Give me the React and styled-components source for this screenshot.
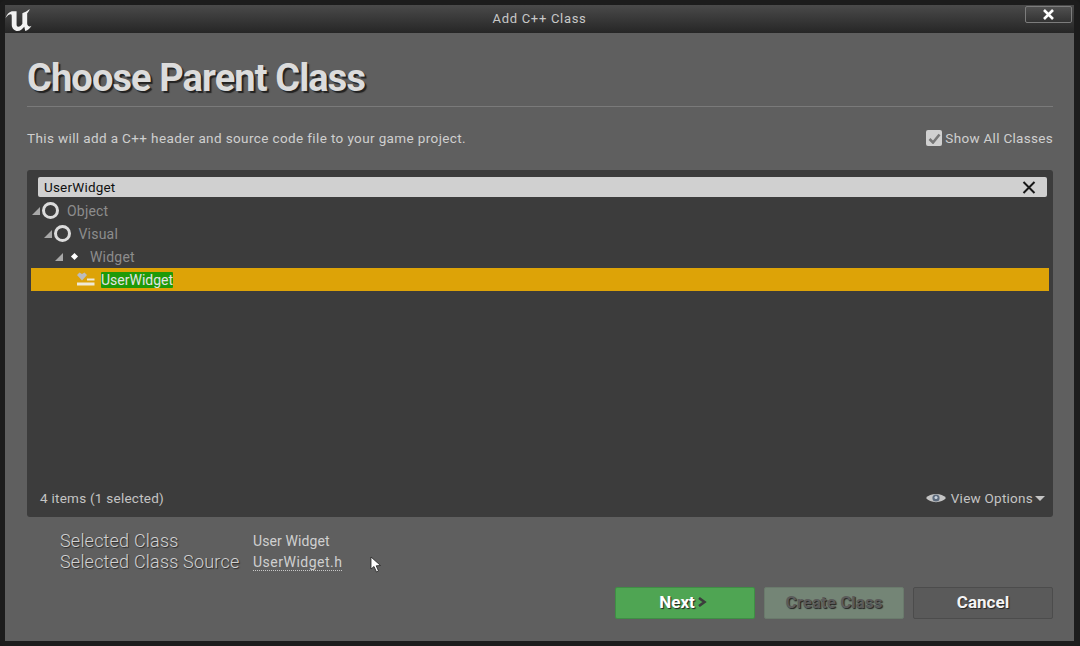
import React from 'react';
import styled, { createGlobalStyle } from 'styled-components';

const GlobalStyle = createGlobalStyle`
    html, body { margin: 0; padding: 0; background: #1a1a1a; }
    body { font-family: Roboto, "Liberation Sans", sans-serif; }
    #root { width: 1080px; height: 646px; overflow: hidden; }
`;

const treeRows = [
    { name: 'Object', depth: 0, icon: 'ring' },
    { name: 'Visual', depth: 1, icon: 'ring' },
    { name: 'Widget', depth: 2, icon: 'dot' },
];

const App = () => {
    return (
        <Window>
            <GlobalStyle />
            <TitleBar>
                <Logo viewBox="0 0 28 24">
                    <path d="M7 3 C4 4 2 6 0.5 10 C3 7 4 6 6 6 C7 6 7 7 7 9 L7 17 C7 21 10 23.5 13 23.5 C16 23.5 18 21 20 19 L21 23.5 C24 22.5 26 20.5 27.5 18 C26 19 25 19 24 18 C23 17 23 16 23 14 L23 5 C24 4 25.5 2 25.5 0.5 C23 3 20 4 18 5 L18 16 C17 18 15 19 14 19 C12 19 12 17 12 15 L12 3 C10 3 9 3 7 3 Z" fill="#f2f2f2" />
                </Logo>
                <TitleText>Add C++ Class</TitleText>
                <CloseButton>
                    <svg width="13" height="11" viewBox="0 0 13 11">
                        <path d="M2 1 L11 10 M11 1 L2 10" stroke="#fff" strokeWidth="2.6" />
                    </svg>
                </CloseButton>
            </TitleBar>
            <Body>
                <Heading>Choose Parent Class</Heading>
                <Rule />
                <InfoRow>
                    <InfoText>This will add a C++ header and source code file to your game project.</InfoText>
                    <CheckLabel>
                        <CheckBox>
                            <svg width="13" height="11" viewBox="0 0 13 11">
                                <path d="M1.5 6 L5 9.5 L11.5 1.5" stroke="#777" strokeWidth="2.6" fill="none" />
                            </svg>
                        </CheckBox>
                        Show All Classes
                    </CheckLabel>
                </InfoRow>
                <Panel>
                    <SearchBox>
                        <SearchText>UserWidget</SearchText>
                        <svg width="14" height="13" viewBox="0 0 14 13">
                            <path d="M1.5 1 L12.5 12 M12.5 1 L1.5 12" stroke="#161616" strokeWidth="2" />
                        </svg>
                    </SearchBox>
                    <Tree>
                        {treeRows.map((row) => (
                            <TreeRow key={row.name} $depth={row.depth}>
                                <Arrow />
                                {row.icon === 'ring' ? <Ring /> : <DotSlot><Dot /></DotSlot>}
                                <RowName>{row.name}</RowName>
                            </TreeRow>
                        ))}
                        <SelectedRow>
                            <svg width="18" height="16" viewBox="0 0 18 16">
                                <path d="M0 3 L2.5 0.5 L5 2 L7.5 0.5 L10 3 L5 8.5 Z" fill="#bcbcbc" />
                                <path d="M10 6.5 H17.5 V8.5 H10 Z M0 10.5 H17.5 V13.5 H0 Z" fill="#efe9d6" />
                            </svg>
                            <Highlight>UserWidget</Highlight>
                        </SelectedRow>
                    </Tree>
                    <PanelFooter>
                        <span>4 items (1 selected)</span>
                        <ViewOptions>
                            <svg width="20" height="12" viewBox="0 0 20 12">
                                <path d="M0 6 C4 0.5 16 0.5 20 6 C16 11.5 4 11.5 0 6 Z" fill="#c4c4c4" />
                                <circle cx="10" cy="6" r="3.6" fill="#5c6a7c" />
                                <circle cx="10" cy="5.4" r="1.5" fill="#c9d2dc" />
                            </svg>
                            View Options
                            <Caret />
                        </ViewOptions>
                    </PanelFooter>
                </Panel>
                <Details>
                    <DetailLabel>Selected Class</DetailLabel>
                    <DetailValue>User Widget</DetailValue>
                    <DetailLabel>Selected Class Source</DetailLabel>
                    <DetailValue>
                        <SourceLink>UserWidget.h</SourceLink>
                    </DetailValue>
                </Details>
                <Cursor width="12" height="17" viewBox="0 0 12 17">
                    <path d="M1 1 L1 13 L4 10.5 L6.5 16 L8.5 15 L6.2 9.8 L10.5 9.5 Z" fill="#fff" stroke="#222" strokeWidth="0.8" />
                </Cursor>
                <Actions>
                    <ActionButton $variant="next">
                        Next
                        <svg width="10" height="10" viewBox="0 0 10 10">
                            <path d="M2 1 L7.5 5 L2 9" stroke="#3c3c3c" strokeWidth="2.6" fill="none" />
                        </svg>
                    </ActionButton>
                    <ActionButton $variant="disabled">Create Class</ActionButton>
                    <ActionButton $variant="cancel">Cancel</ActionButton>
                </Actions>
            </Body>
        </Window>
    );
};

const Window = styled.div`
    width: 1080px;
    height: 646px;
    box-sizing: border-box;
    padding: 5px 6px 5px 5px;
    background: #1c1c1c;
    border-radius: 5px;
    display: flex;
    flex-direction: column;
    position: relative;
`;

const TitleBar = styled.div`
    height: 28px;
    flex: none;
    display: flex;
    align-items: center;
    justify-content: center;
    background: linear-gradient(#4a4a4a, #262626);
`;

const Logo = styled.svg`
    position: absolute;
    left: 5px;
    top: 8px;
    width: 27px;
    height: 24px;
`;

const TitleText = styled.div`
    color: #c8c8c8;
    font-size: 13px;
    letter-spacing: 0.7px;
    margin-bottom: 1px;
`;

const CloseButton = styled.div`
    position: absolute;
    top: 6px;
    right: 8px;
    width: 47px;
    height: 17px;
    box-sizing: border-box;
    display: flex;
    align-items: center;
    justify-content: center;
    background: linear-gradient(#505050, #333);
    border: 1px solid #7c7c7c;
    border-radius: 2px;
`;

const Body = styled.div`
    flex: 1;
    min-height: 0;
    background: #5f5f5f;
    padding: 0 21px 0 22px;
    display: flex;
    flex-direction: column;
    position: relative;
`;

const Heading = styled.h1`
    margin: 23px 0 0;
    height: 45px;
    line-height: 45px;
    font-size: 38px;
    font-weight: 700;
    color: #dcdcdc;
    letter-spacing: -0.9px;
    text-shadow: 2px 2px 1px #222;
`;

const Rule = styled.div`
    height: 1px;
    margin: 5px 0 0;
    background: #7a7a7a;
`;

const InfoRow = styled.div`
    display: flex;
    justify-content: space-between;
    align-items: center;
    margin-top: 22px;
    height: 18px;
    font-size: 13.5px;
    color: #cfcfcf;
`;

const InfoText = styled.span`
    letter-spacing: 0.38px;
`;

const CheckLabel = styled.span`
    display: flex;
    align-items: center;
    gap: 3px;
    letter-spacing: 0.3px;
`;

const CheckBox = styled.span`
    width: 16px;
    height: 16px;
    background: #d0d0d0;
    border-radius: 2px;
    display: flex;
    align-items: center;
    justify-content: center;
`;

const Panel = styled.div`
    margin-top: 23px;
    height: 347px;
    box-sizing: border-box;
    background: #3c3c3c;
    border-radius: 3px;
    padding: 7px 4px 0;
    display: flex;
    flex-direction: column;
`;

const SearchBox = styled.div`
    height: 20px;
    flex: none;
    margin: 0 2px 0 7px;
    padding: 0 11px 0 6px;
    background: #d0d0d0;
    border-radius: 2px;
    display: flex;
    align-items: center;
    justify-content: space-between;
`;

const SearchText = styled.span`
    color: #111;
    font-size: 13.5px;
    letter-spacing: 0.2px;
`;

const Tree = styled.div`
    flex: 1;
    margin-top: 2px;
`;

const TreeRow = styled.div`
    height: 23px;
    display: flex;
    align-items: center;
    padding-left: ${(p) => 1 + p.$depth * 11.5}px;
    color: #8d8d8d;
    font-size: 14px;
`;

const Arrow = styled.span`
    width: 0;
    height: 0;
    border-style: solid;
    border-width: 0 0 8px 8px;
    border-color: transparent transparent #a8a8a8 transparent;
    margin-right: 2px;
`;

const Ring = styled.span`
    width: 11px;
    height: 11px;
    border: 3px solid #dcdcdc;
    border-radius: 50%;
    margin-right: 8px;
`;

const DotSlot = styled.span`
    width: 17px;
    margin-left: 1px;
    margin-right: 7px;
    display: flex;
    justify-content: center;
`;

const Dot = styled.span`
    width: 5px;
    height: 5px;
    background: #fff;
    transform: rotate(45deg);
`;

const RowName = styled.span`
    letter-spacing: 0.2px;
`;

const SelectedRow = styled.div`
    height: 23px;
    background: #dda307;
    display: flex;
    align-items: center;
    padding-left: 46px;
    gap: 6px;
`;

const Highlight = styled.span`
    background: #1f9a08;
    color: #e4e4e4;
    font-size: 14px;
    line-height: 16px;
    border-radius: 1px;
`;

const PanelFooter = styled.div`
    height: 38px;
    flex: none;
    display: flex;
    align-items: center;
    justify-content: space-between;
    padding: 0 4px 0 9px;
    color: #c4c4c4;
    font-size: 13.5px;
    letter-spacing: 0.25px;
`;

const ViewOptions = styled.span`
    display: flex;
    align-items: center;
    gap: 5px;
`;

const Caret = styled.span`
    width: 0;
    height: 0;
    margin-left: -3px;
    border-style: solid;
    border-width: 5px 5px 0;
    border-color: #c4c4c4 transparent transparent;
`;

const Details = styled.div`
    margin: 13px 0 0 33px;
    display: grid;
    grid-template-columns: 193px 1fr;
    grid-auto-rows: 21px;
    align-items: center;
`;

const DetailLabel = styled.span`
    color: #d2d2d2;
    font-size: 18px;
    font-weight: 300;
    letter-spacing: 0.2px;
    text-shadow: 1px 1px 1px #2c2c2c;
`;

const DetailValue = styled.span`
    color: #d0d0d0;
    font-size: 14px;
    letter-spacing: 0.1px;
`;

const SourceLink = styled.span`
    letter-spacing: 0.5px;
    border-bottom: 1px dotted #c8c8c8;
`;

const Cursor = styled.svg`
    position: absolute;
    left: 365px;
    top: 523px;
`;

const buttonSkins = {
    next: 'background: #4fa553; border-color: #3f8e45; color: #fff; padding-right: 4px;',
    disabled: 'background: #748576; border-color: #6a7a6c; color: #5b5b5b;',
    cancel: 'background: #5a5a5a; border-color: #4c4c4c; color: #f4f4f4;',
};

const Actions = styled.div`
    margin-top: 15px;
    display: flex;
    justify-content: flex-end;
    gap: 9px;
`;

const ActionButton = styled.div`
    width: 140px;
    height: 32px;
    box-sizing: border-box;
    border: 1px solid;
    border-radius: 2px;
    padding-bottom: 2px;
    display: flex;
    align-items: center;
    justify-content: center;
    gap: 2px;
    font-size: 17px;
    font-weight: 700;
    text-shadow: 1px 1px 1px #222;
    ${(p) => buttonSkins[p.$variant]}
`;

export default App;
